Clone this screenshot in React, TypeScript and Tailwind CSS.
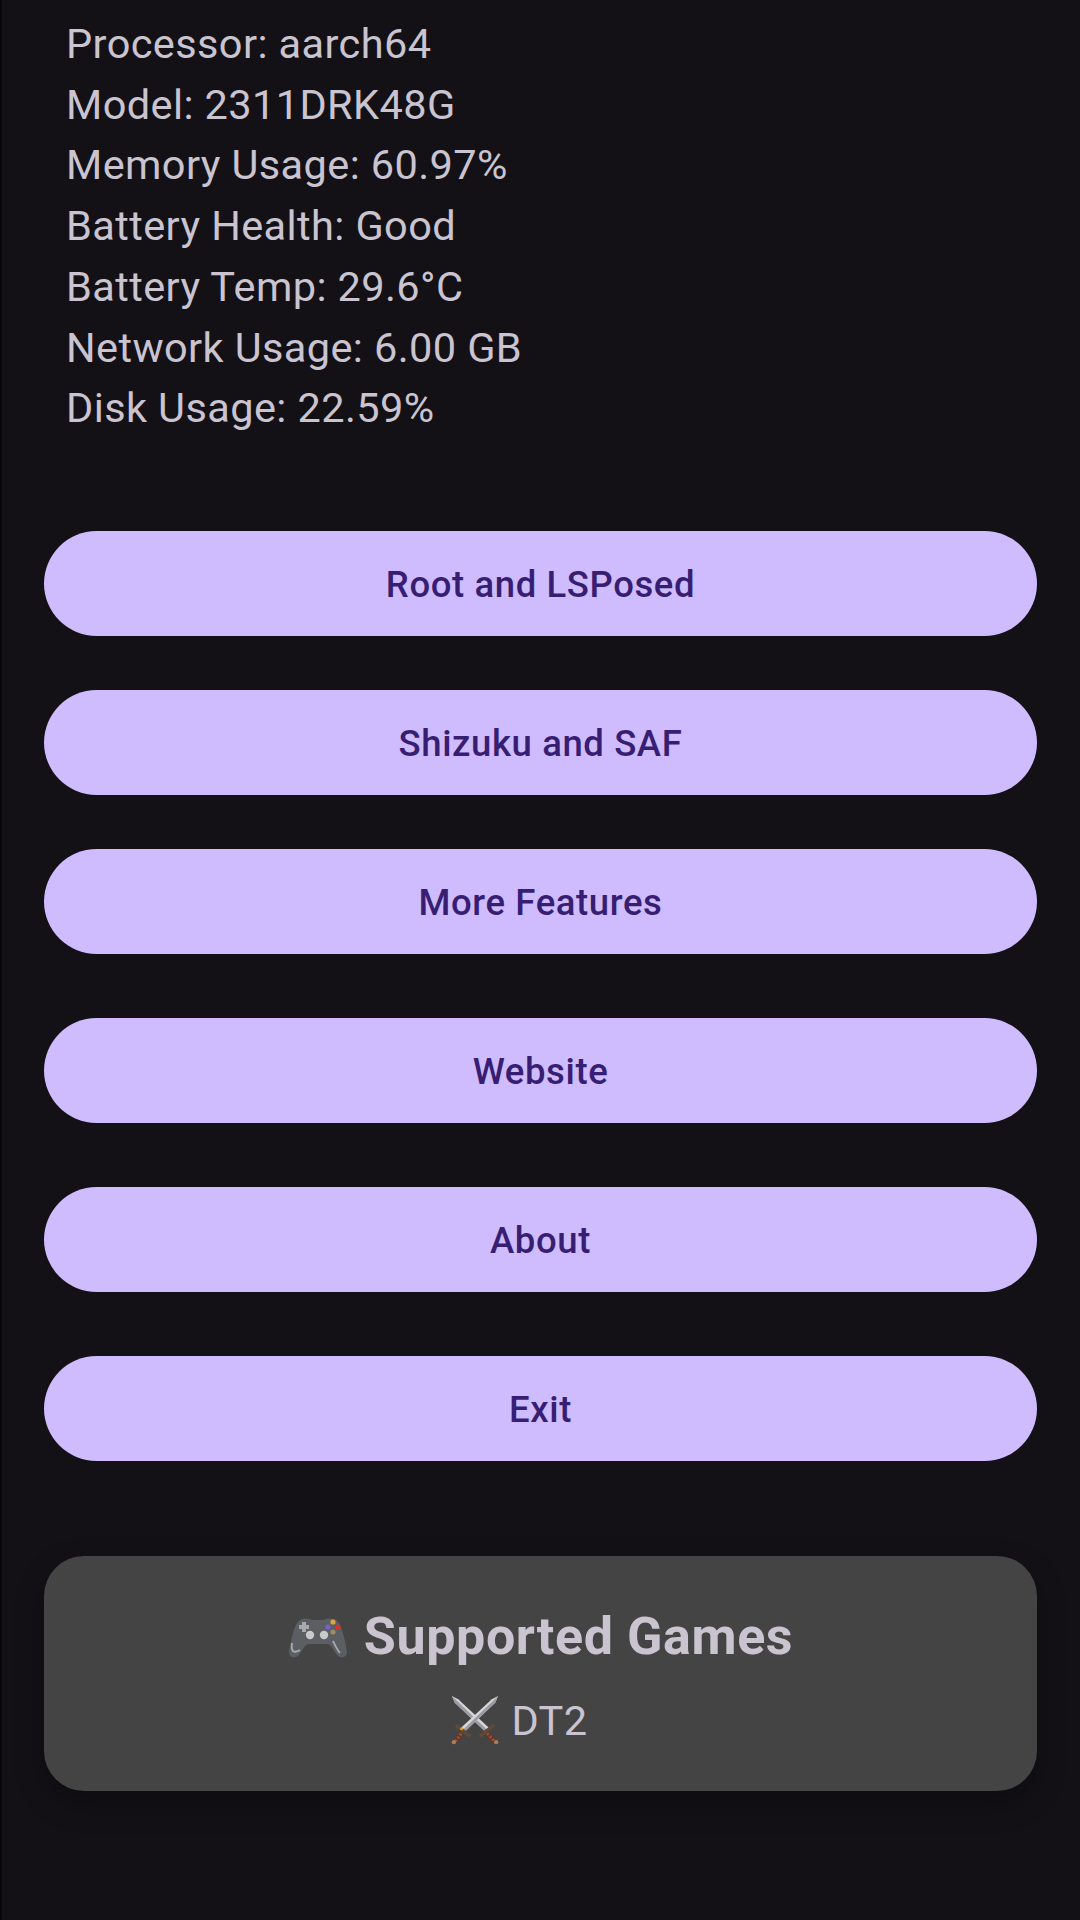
// App.tsx
import React from 'react';

const stats = [
    'Processor: aarch64',
    'Model: 2311DRK48G',
    'Memory Usage: 60.97%',
    'Battery Health: Good',
    'Battery Temp: 29.6°C',
    'Network Usage: 6.00 GB',
    'Disk Usage: 22.59%',
];

const GamepadIcon = () => (
    <svg viewBox="0 0 60 44" className="w-[60px] h-[44px]">
        <path
            d="M12 5 C18 2 22 4 24 5 H36 C38 4 42 2 48 5 C54 8 58 30 59 37 C59 42 54 44 50 41 C46 37 44 30 40 29 H20 C16 30 14 37 10 41 C6 44 1 42 1 37 C2 30 6 8 12 5 Z"
            fill="#5b5e63"
        />
        <path d="M11 10 h3 v-3 h4 v3 h3 v4 h-3 v3 h-4 v-3 h-3 Z" fill="#a9a9ae" />
        <circle cx="22" cy="20" r="4.2" fill="#c9c9cc" />
        <circle cx="36" cy="20" r="4.2" fill="#c9c9cc" />
        <circle cx="45" cy="7" r="2.6" fill="#d9a441" />
        <circle cx="40" cy="12" r="2.6" fill="#7a62c4" />
        <circle cx="50" cy="12" r="2.6" fill="#d8322c" />
        <circle cx="45" cy="17" r="2.6" fill="#9c8a68" />
        <path d="M4 28 C3 36 5 39 12 35" stroke="#a9a9ae" strokeWidth="1.8" fill="none" />
        <path d="M45 26 C47 30 49 35 52 38" stroke="#a9a9ae" strokeWidth="1.8" fill="none" />
    </svg>
);

const SwordsIcon = () => (
    <svg viewBox="0 0 52 52" className="w-[50px] h-[50px]">
        {/* left-tip sword goes underneath */}
        <path d="M2 0 L8.5 3.5 L40.5 33 L36.5 37 L5 7 Z" fill="#d5d5da" />
        <path d="M2 0 L5 7 L36.5 37 L38.5 35 Z" fill="#9a9ba1" />
        <path d="M36 36 L47 48" stroke="#5f3a2a" strokeWidth="5.5" />
        <path d="M36 36 L47 48" stroke="#9a5236" strokeWidth="3" strokeDasharray="2 2" />
        <path d="M31 42 L46 30" stroke="#5e4a3a" strokeWidth="3.5" />
        <circle cx="48" cy="48" r="2.2" fill="#a9805f" />
        {/* right-tip sword */}
        <path d="M50 0 L43.5 3.5 L11.5 33 L15.5 37 L47 7 Z" fill="#d5d5da" />
        <path d="M50 0 L47 7 L15.5 37 L13.5 35 Z" fill="#9a9ba1" />
        <path d="M14 36 L5 48" stroke="#5f3a2a" strokeWidth="5.5" />
        <path d="M14 36 L5 48" stroke="#9a5236" strokeWidth="3" strokeDasharray="2 2" />
        <path d="M6 30 L21 42" stroke="#5e4a3a" strokeWidth="3.5" />
        <circle cx="12" cy="34" r="1.6" fill="#e0a030" />
        <circle cx="4" cy="48" r="2.2" fill="#a9805f" />
    </svg>
);

const MenuButton = ({ label, className }: { label: string; className: string }) => (
    <button className={`h-[105.5px] w-full rounded-full bg-[#cfbcff] text-[#381e72] text-[36.5px] font-medium tracking-[0.6px] pt-[4px] flex items-center justify-center ${className}`}>
        {label}
    </button>
);

export default function App() {
    return (
        <div
            className="w-[1080px] h-[1920px] overflow-hidden bg-[#131116] border-l-2 border-[#08080a] pl-[42px] pr-[43px] pt-[14px]"
            style={{ fontFamily: 'Roboto, sans-serif' }}
        >
            <div className="pl-[22px] text-[41.5px] leading-[60.7px] tracking-[0.4px] text-[#cac4d0]">
                {stats.map((line) => (
                    <div key={line}>{line}</div>
                ))}
            </div>
            <MenuButton label="Root and LSPosed" className="mt-[92px]" />
            <MenuButton label="Shizuku and SAF" className="mt-[53.5px]" />
            <MenuButton label="More Features" className="mt-[53.5px]" />
            <MenuButton label="Website" className="mt-[63.5px]" />
            <MenuButton label="About" className="mt-[63.5px]" />
            <MenuButton label="Exit" className="mt-[63.5px]" />
            <div className="mt-[95px] h-[235px] rounded-[40px] bg-[#444444] shadow-[0_12px_30px_rgba(0,0,0,0.3)] flex flex-col items-center text-[#cac4d0] pt-[53px]">
                <div className="flex items-center gap-[16px] text-[52px] leading-[56px] font-bold tracking-[0.6px]">
                    <GamepadIcon />
                    <span>Supported Games</span>
                </div>
                <div className="mt-[31px] pr-[44px] flex items-center gap-[12px] text-[41.5px] leading-[50px] tracking-[0.4px]">
                    <SwordsIcon />
                    <span>DT2</span>
                </div>
            </div>
        </div>
    );
}
